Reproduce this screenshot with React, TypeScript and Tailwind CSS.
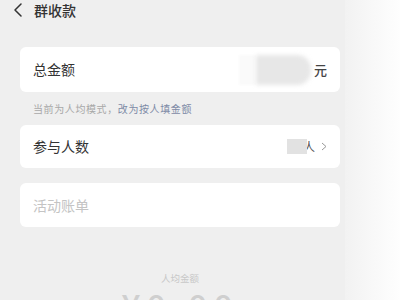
import React from "react";

const font = { fontFamily: '"Noto Sans CJK SC", "Noto Sans", sans-serif' };

const Card = ({ children }: { children: React.ReactNode }) => (
  <div className="ml-[20px] mr-[5px] flex shrink-0 items-center rounded-[6px] bg-white px-[13px]">
    {children}
  </div>
);

export default function App() {
  return (
    <div className="flex h-[300px] w-[400px] overflow-hidden" style={font}>
      {/* MAIN */}
      <div className="flex w-[345px] shrink-0 flex-col bg-[#efefef]">
        {/* HEADER */}
        <div className="flex h-[19px] shrink-0 items-center gap-[11px] pl-[13px]">
          <svg width="10" height="14" viewBox="0 0 10 14" fill="none">
            <polyline
              points="8,1 2,7 8,13"
              stroke="#333"
              strokeWidth="1.5"
              strokeLinecap="round"
              strokeLinejoin="round"
            />
          </svg>
          <span className="text-[14px] font-medium leading-none text-[#333]">
            群收款
          </span>
        </div>

        {/* TOTAL */}
        <div className="mt-[28px] shrink-0">
          <Card>
            <div className="flex h-[45px] w-full items-center">
              <span className="text-[14px] text-[#333]">总金额</span>
              <div className="ml-auto flex items-center">
                <div className="h-[30px] w-[16px] bg-[#fafafa] blur-[1px]" />
                <div className="ml-[1px] h-[30px] w-[55px] rounded-r-[14px] bg-[#e7e7e7] blur-[2px]" />
                <span className="ml-[3px] text-[13px] font-medium text-[#444]">元</span>
              </div>
            </div>
          </Card>
        </div>

        <div className="flex h-[33px] shrink-0 items-center pl-[33px] text-[10px] tracking-[0.6px]">
          <span className="text-[#a8a8a8]">当前为人均模式，</span>
          <span className="text-[#7d8aa6]">改为按人填金额</span>
        </div>

        {/* MEMBERS */}
        <Card>
          <div className="flex h-[43px] w-full items-center">
            <span className="text-[14px] text-[#333]">参与人数</span>
            <div className="ml-auto flex items-center">
              <div className="h-[15px] w-[20px] bg-[#e2e2e2] blur-[0.5px]" />
              <span className="-ml-[4px] text-[12px] text-[#555]">人</span>
              <svg className="ml-[6px]" width="6" height="9" viewBox="0 0 6 9" fill="none">
                <polyline points="1,1 5,4.5 1,8" stroke="#999" strokeWidth="1" />
              </svg>
            </div>
          </div>
        </Card>

        {/* BILL */}
        <div className="mt-[15px] shrink-0">
          <Card>
            <div className="flex h-[44px] w-full items-center">
              <span className="text-[14px] text-[#c4c4c4]">活动账单</span>
            </div>
          </Card>
        </div>

        {/* AVERAGE */}
        <div className="ml-[20px] mr-[5px] mt-[47px] flex shrink-0 flex-col items-center">
          <span className="text-[9.5px] leading-none text-[#c8c8c8]">人均金额</span>
          <span className="mt-[4px] text-[34px] font-medium leading-none tracking-[6px] text-[#cfcfcf]">
            ¥0.00
          </span>
        </div>
      </div>

      {/* RIGHT STRIP */}
      <div className="flex-1 bg-gradient-to-r from-[#f2f2f2] to-[#fefefe]" />
    </div>
  );
}
